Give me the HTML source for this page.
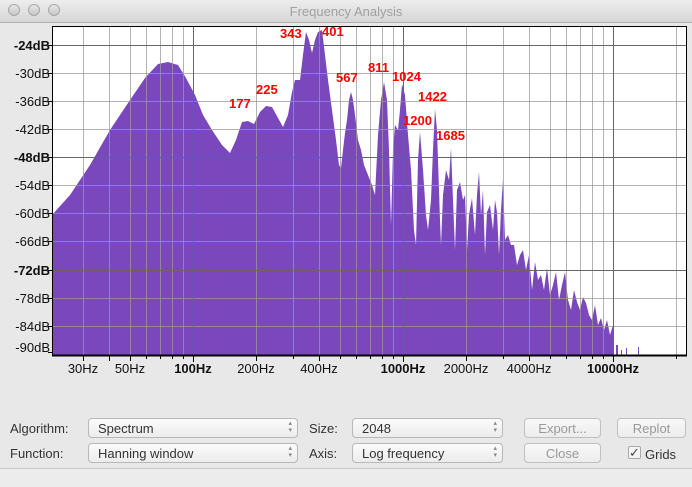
<!DOCTYPE html>
<html><head><meta charset="utf-8"><style>
html,body{margin:0;padding:0;width:692px;height:486px;overflow:hidden;background:#e8e8e8;font-family:"Liberation Sans",sans-serif}
.tb{position:absolute;left:0;top:0;width:692px;height:22px;background:linear-gradient(#ededed,#d6d6d6);border-bottom:1px solid #b0b0b0}
.tb .t{position:absolute;left:0;right:0;top:4px;text-align:center;font-size:13px;color:#a0a0a0}
.dot{position:absolute;top:4px;width:12px;height:12px;border-radius:50%;background:linear-gradient(#e8e8e8,#c4c4c4);border:1px solid #a8a8a8;box-sizing:border-box}
.lbl{position:absolute;font-size:13px;color:#333}
.sel{position:absolute;height:20px;box-sizing:border-box;border:1px solid #b8b8b8;border-radius:4px;background:linear-gradient(#fbfbfb,#ececec);font-size:13px;color:#333;padding:2px 0 0 9px}
.sel:after{content:"▴\A▾";white-space:pre;position:absolute;right:5px;top:1px;font-size:7px;line-height:7px;color:#888}
.btn{position:absolute;height:20px;box-sizing:border-box;border:1px solid #c0c0c0;border-radius:4px;background:linear-gradient(#f8f8f8,#ececec);font-size:13px;color:#999;text-align:center;padding-top:2px}
</style></head><body>
<div class="tb"><div class="dot" style="left:8px"></div><div class="dot" style="left:28px"></div><div class="dot" style="left:48px"></div><div class="t">Frequency Analysis</div></div>
<svg width="692" height="400" style="position:absolute;left:0;top:0" font-family="Liberation Sans, sans-serif">
<rect x="52" y="27" width="634" height="328" fill="#fff"/>
<polygon fill="#7b47bc" points="52,355 52,215 70,195 90,165 110,130 130,100 145,78 158,64 168,62 178,65 186,78 195,95 203,115 212,130 222,145 230,153 236,140 242,122 248,121 254,124 260,112 266,106 272,107 278,118 283,127 288,115 292,92 295,80 300,80 303,55 306,32 309,40 312,53 315,40 318,32 322,30 325,55 328,80 332,110 336,140 339,165 341,168 343,150 345,133 347,120 349,100 351,92 353,100 355,115 358,140 361,150 364,165 368,175 372,185 375,195 378,135 381,100 384,82 387,100 389,150 391,225 393,150 395,125 398,130 400,110 402,84 405,95 408,135 411,170 414,230 416,245 418,160 420,132 423,170 426,215 428,230 431,200 433,150 435,109 437,130 440,220 441,245 443,195 446,170 449,180 451,148 453,200 455,250 457,190 460,182 463,200 465,195 467,250 469,215 472,198 475,235 477,195 479,172 481,215 483,190 485,255 487,212 490,205 493,230 495,200 497,212 499,255 501,210 503,180 505,240 508,235 511,245 514,245 517,265 520,255 523,250 526,270 529,255 532,290 535,262 538,280 541,275 544,290 547,268 550,295 553,285 556,272 559,300 562,285 565,272 568,300 571,310 574,290 577,302 580,310 583,297 586,303 589,315 592,320 595,305 598,325 601,318 604,330 607,320 610,335 613,325 614,355"/>
<g fill="#7b47bc"><rect x="616" y="345" width="2" height="10"/><rect x="621" y="350" width="1" height="5"/><rect x="626" y="348" width="1" height="7"/><rect x="638" y="347" width="1" height="8"/></g>
<g stroke="#999" stroke-opacity="0.75" stroke-width="1">
<line x1="52" y1="73.5" x2="686" y2="73.5"/><line x1="52" y1="101.5" x2="686" y2="101.5"/><line x1="52" y1="129.5" x2="686" y2="129.5"/><line x1="52" y1="185.5" x2="686" y2="185.5"/><line x1="52" y1="213.5" x2="686" y2="213.5"/><line x1="52" y1="241.5" x2="686" y2="241.5"/><line x1="52" y1="298.5" x2="686" y2="298.5"/><line x1="52" y1="326.5" x2="686" y2="326.5"/>
<line x1="83.5" y1="27" x2="83.5" y2="355"/><line x1="109.5" y1="27" x2="109.5" y2="355"/><line x1="130.5" y1="27" x2="130.5" y2="355"/><line x1="146.5" y1="27" x2="146.5" y2="355"/><line x1="160.5" y1="27" x2="160.5" y2="355"/><line x1="172.5" y1="27" x2="172.5" y2="355"/><line x1="183.5" y1="27" x2="183.5" y2="355"/>
<line x1="256.5" y1="27" x2="256.5" y2="355"/><line x1="293.5" y1="27" x2="293.5" y2="355"/><line x1="319.5" y1="27" x2="319.5" y2="355"/><line x1="340.5" y1="27" x2="340.5" y2="355"/><line x1="356.5" y1="27" x2="356.5" y2="355"/><line x1="370.5" y1="27" x2="370.5" y2="355"/><line x1="382.5" y1="27" x2="382.5" y2="355"/><line x1="393.5" y1="27" x2="393.5" y2="355"/>
<line x1="466.5" y1="27" x2="466.5" y2="355"/><line x1="503.5" y1="27" x2="503.5" y2="355"/><line x1="529.5" y1="27" x2="529.5" y2="355"/><line x1="550.5" y1="27" x2="550.5" y2="355"/><line x1="566.5" y1="27" x2="566.5" y2="355"/><line x1="580.5" y1="27" x2="580.5" y2="355"/><line x1="592.5" y1="27" x2="592.5" y2="355"/><line x1="603.5" y1="27" x2="603.5" y2="355"/><line x1="676.5" y1="27" x2="676.5" y2="355"/>
</g>
<g stroke="#666" stroke-width="1">
<line x1="52" y1="45.5" x2="686" y2="45.5"/><line x1="52" y1="157.5" x2="686" y2="157.5"/><line x1="52" y1="270.5" x2="686" y2="270.5"/>
<line x1="193.5" y1="27" x2="193.5" y2="355"/><line x1="403.5" y1="27" x2="403.5" y2="355"/><line x1="613.5" y1="27" x2="613.5" y2="355"/>
</g>
<rect x="52.5" y="26.5" width="634" height="329" fill="none" stroke="#000" stroke-width="1"/>
<line x1="52" y1="355.5" x2="687" y2="355.5" stroke="#000" stroke-width="2"/>
<g stroke="#000"><line x1="83.5" y1="355" x2="83.5" y2="361"/><line x1="109.5" y1="355" x2="109.5" y2="361"/><line x1="130.5" y1="355" x2="130.5" y2="361"/><line x1="146.5" y1="355" x2="146.5" y2="359"/><line x1="160.5" y1="355" x2="160.5" y2="359"/><line x1="172.5" y1="355" x2="172.5" y2="359"/><line x1="183.5" y1="355" x2="183.5" y2="359"/><line x1="193.5" y1="355" x2="193.5" y2="362"/><line x1="256.5" y1="355" x2="256.5" y2="361"/><line x1="293.5" y1="355" x2="293.5" y2="359"/><line x1="319.5" y1="355" x2="319.5" y2="361"/><line x1="340.5" y1="355" x2="340.5" y2="359"/><line x1="356.5" y1="355" x2="356.5" y2="359"/><line x1="370.5" y1="355" x2="370.5" y2="359"/><line x1="382.5" y1="355" x2="382.5" y2="359"/><line x1="393.5" y1="355" x2="393.5" y2="359"/><line x1="403.5" y1="355" x2="403.5" y2="362"/><line x1="466.5" y1="355" x2="466.5" y2="361"/><line x1="503.5" y1="355" x2="503.5" y2="359"/><line x1="529.5" y1="355" x2="529.5" y2="361"/><line x1="550.5" y1="355" x2="550.5" y2="359"/><line x1="566.5" y1="355" x2="566.5" y2="359"/><line x1="580.5" y1="355" x2="580.5" y2="359"/><line x1="592.5" y1="355" x2="592.5" y2="359"/><line x1="603.5" y1="355" x2="603.5" y2="359"/><line x1="613.5" y1="355" x2="613.5" y2="362"/><line x1="676.5" y1="355" x2="676.5" y2="359"/>
<line x1="48" y1="45.5" x2="52" y2="45.5"/><line x1="48" y1="73.5" x2="52" y2="73.5"/><line x1="48" y1="101.5" x2="52" y2="101.5"/><line x1="48" y1="129.5" x2="52" y2="129.5"/><line x1="48" y1="157.5" x2="52" y2="157.5"/><line x1="48" y1="185.5" x2="52" y2="185.5"/><line x1="48" y1="213.5" x2="52" y2="213.5"/><line x1="48" y1="241.5" x2="52" y2="241.5"/><line x1="48" y1="270.5" x2="52" y2="270.5"/><line x1="48" y1="298.5" x2="52" y2="298.5"/><line x1="48" y1="326.5" x2="52" y2="326.5"/><line x1="48" y1="352.5" x2="52" y2="352.5"/></g>
<g font-size="13" fill="#111" text-anchor="end">
<text x="50" y="50" font-weight="bold">-24dB</text><text x="50" y="78">-30dB</text><text x="50" y="106">-36dB</text><text x="50" y="134">-42dB</text><text x="50" y="162" font-weight="bold">-48dB</text><text x="50" y="190">-54dB</text><text x="50" y="218">-60dB</text><text x="50" y="246">-66dB</text><text x="50" y="275" font-weight="bold">-72dB</text><text x="50" y="303">-78dB</text><text x="50" y="331">-84dB</text><text x="50" y="352">-90dB</text>
</g>
<g font-size="13" fill="#111" text-anchor="middle">
<text x="83" y="373">30Hz</text><text x="130" y="373">50Hz</text><text x="193" y="373" font-weight="bold">100Hz</text><text x="256" y="373">200Hz</text><text x="319" y="373">400Hz</text><text x="403" y="373" font-weight="bold">1000Hz</text><text x="466" y="373">2000Hz</text><text x="529" y="373">4000Hz</text><text x="613" y="373" font-weight="bold">10000Hz</text>
</g>
<g font-size="13" font-weight="bold" fill="#f00">
<text x="280" y="38">343</text><text x="322" y="36">401</text><text x="229" y="108">177</text><text x="256" y="94">225</text><text x="336" y="82">567</text><text x="368" y="72">811</text><text x="392" y="81">1024</text><text x="418" y="101">1422</text><text x="403" y="125">1200</text><text x="436" y="140">1685</text>
</g>
</svg>
<div class="lbl" style="left:10px;top:421px">Algorithm:</div>
<div class="sel" style="left:88px;top:418px;width:210px">Spectrum</div>
<div class="lbl" style="left:309px;top:421px">Size:</div>
<div class="sel" style="left:352px;top:418px;width:151px">2048</div>
<div class="btn" style="left:524px;top:418px;width:77px">Export...</div>
<div class="btn" style="left:617px;top:418px;width:69px">Replot</div>
<div class="lbl" style="left:10px;top:446px">Function:</div>
<div class="sel" style="left:88px;top:443px;width:210px">Hanning window</div>
<div class="lbl" style="left:309px;top:446px">Axis:</div>
<div class="sel" style="left:352px;top:443px;width:151px">Log frequency</div>
<div class="btn" style="left:524px;top:443px;width:77px">Close</div>
<div style="position:absolute;left:628px;top:446px;width:13px;height:13px;box-sizing:border-box;border:1px solid #aaa;border-radius:2px;background:#f4f4f4;font-size:13px;line-height:11px;color:#444;text-align:center">✓</div>
<div class="lbl" style="left:645px;top:447px">Grids</div>
<div style="position:absolute;left:0;top:468px;width:692px;height:18px;border-top:1px solid #c8c8c8;background:#ececec"></div>
</body></html>
